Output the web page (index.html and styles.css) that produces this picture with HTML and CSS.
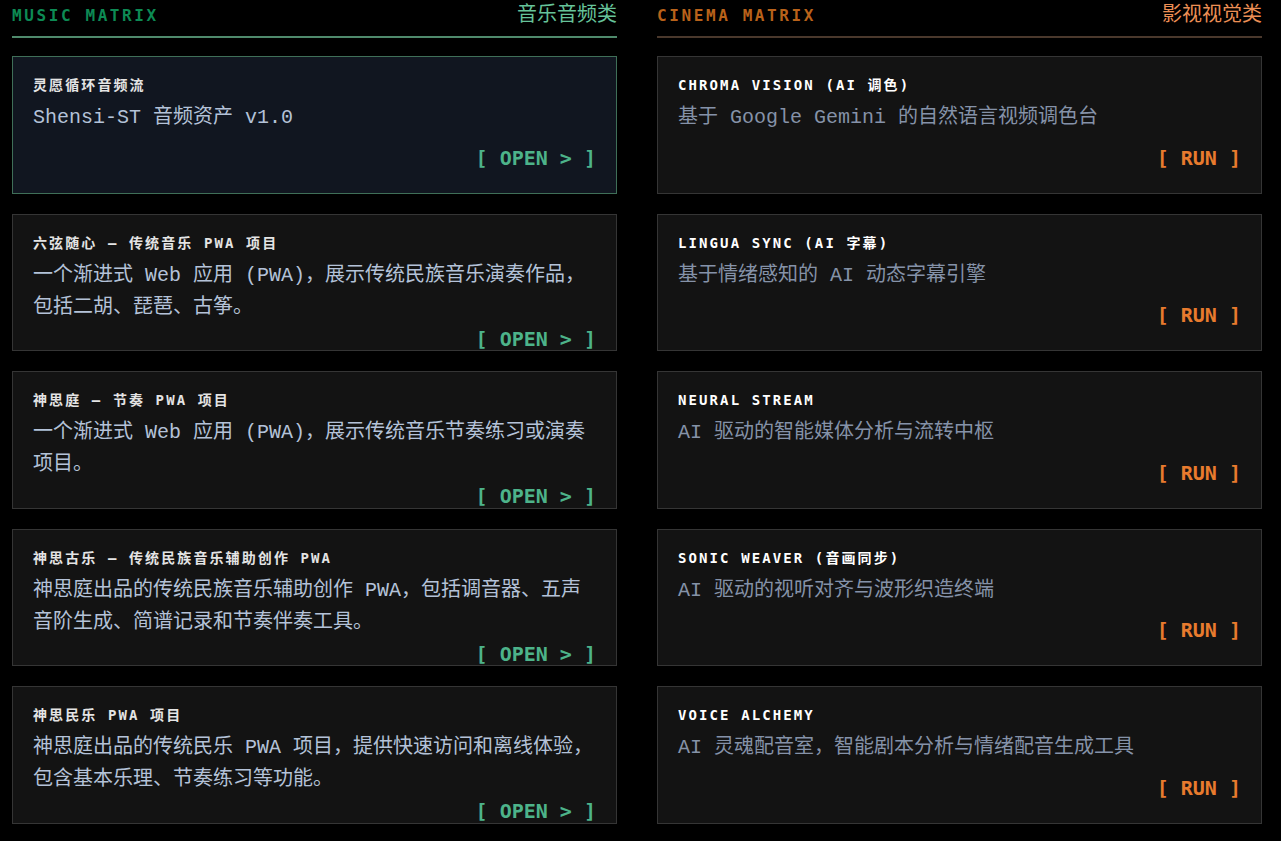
FILE: index.html
```html
<!DOCTYPE html>
<html lang="zh-CN">
<head>
  <meta charset="UTF-8">
  <meta name="viewport" content="width=device-width, initial-scale=1.0">
  <title>Matrix</title>
  <link rel="stylesheet" href="styles.css">
</head>
<body>
  <div class="matrix">
    <section class="column music">
      <header class="col-head">
        <span class="col-tag">MUSIC MATRIX</span>
        <span class="col-name">音乐音频类</span>
      </header>

      <div class="card active">
        <div class="card-title">灵愿循环音频流</div>
        <div class="card-desc">Shensi-ST 音频资产 v1.0</div>
        <span class="card-btn">[ OPEN &gt; ]</span>
      </div>

      <div class="card">
        <div class="card-title">六弦随心 – 传统音乐 PWA 项目</div>
        <div class="card-desc">一个渐进式 Web 应用 (PWA)，展示传统民族音乐演奏作品，包括二胡、琵琶、古筝。</div>
        <span class="card-btn">[ OPEN &gt; ]</span>
      </div>

      <div class="card">
        <div class="card-title">神思庭 – 节奏 PWA 项目</div>
        <div class="card-desc">一个渐进式 Web 应用 (PWA)，展示传统音乐节奏练习或演奏项目。</div>
        <span class="card-btn">[ OPEN &gt; ]</span>
      </div>

      <div class="card">
        <div class="card-title">神思古乐 – 传统民族音乐辅助创作 PWA</div>
        <div class="card-desc">神思庭出品的传统民族音乐辅助创作 PWA，包括调音器、五声音阶生成、简谱记录和节奏伴奏工具。</div>
        <span class="card-btn">[ OPEN &gt; ]</span>
      </div>

      <div class="card">
        <div class="card-title">神思民乐 PWA 项目</div>
        <div class="card-desc">神思庭出品的传统民乐 PWA 项目，提供快速访问和离线体验，包含基本乐理、节奏练习等功能。</div>
        <span class="card-btn">[ OPEN &gt; ]</span>
      </div>
    </section>

    <section class="column cinema">
      <header class="col-head">
        <span class="col-tag">CINEMA MATRIX</span>
        <span class="col-name">影视视觉类</span>
      </header>

      <div class="card">
        <div class="card-title">CHROMA VISION (AI 调色)</div>
        <div class="card-desc">基于 Google Gemini 的自然语言视频调色台</div>
        <span class="card-btn">[ RUN ]</span>
      </div>

      <div class="card">
        <div class="card-title">LINGUA SYNC (AI 字幕)</div>
        <div class="card-desc">基于情绪感知的 AI 动态字幕引擎</div>
        <span class="card-btn">[ RUN ]</span>
      </div>

      <div class="card">
        <div class="card-title">NEURAL STREAM</div>
        <div class="card-desc">AI 驱动的智能媒体分析与流转中枢</div>
        <span class="card-btn">[ RUN ]</span>
      </div>

      <div class="card">
        <div class="card-title">SONIC WEAVER (音画同步)</div>
        <div class="card-desc">AI 驱动的视听对齐与波形织造终端</div>
        <span class="card-btn">[ RUN ]</span>
      </div>

      <div class="card">
        <div class="card-title">VOICE ALCHEMY</div>
        <div class="card-desc">AI 灵魂配音室，智能剧本分析与情绪配音生成工具</div>
        <span class="card-btn">[ RUN ]</span>
      </div>
    </section>
  </div>
</body>
</html>
```

FILE: styles.css
```css
body {
  margin: 0;
  padding: 0 12px;
  background: #000;
  font-family: 'DejaVu Sans Mono', 'Noto Sans CJK SC', monospace;
}
.matrix {
  display: grid;
  grid-template-columns: 605px 605px;
  gap: 40px;
}
.col-head {
  display: flex;
  justify-content: space-between;
  align-items: baseline;
  line-height: 24px;
  padding-top: 1px;
  padding-bottom: 8px;
  border-bottom: 2px solid #4f8a6c;
  margin-bottom: 18px;
}
.col-tag {
  font-size: 16px;
  font-weight: bold;
  letter-spacing: 2.6px;
}
.col-name {
  font-family: 'Noto Sans CJK SC', sans-serif;
  font-size: 20px;
}
.card {
  box-sizing: border-box;
  height: 137.5px;
  display: flex;
  flex-direction: column;
  padding: 20px;
  margin-bottom: 20px;
  background: #131313;
  border: 1px solid #353535;
}
.card-title {
  font-size: 14px;
  line-height: 16px;
  font-weight: bold;
  letter-spacing: 2.1px;
  margin-bottom: 9px;
}
.card-desc {
  font-family: 'Liberation Mono', 'Noto Sans CJK SC', monospace;
  font-size: 20px;
  line-height: 32px;
}
.card-btn {
  margin-top: auto;
  text-align: right;
  font-size: 20px;
  line-height: 30px;
  font-weight: bold;
}

/* music column */
.music .col-tag { color: #0d8a54; }
.music .col-name { color: #66c39a; }
.music .card-title { color: #e4e4e4; }
.music .card-desc { color: #b4c2d8; }
.music .card-btn { color: #4db38a; }
.music .card.active {
  background: #111620;
  border-color: #3f6f58;
}

/* cinema column */
.cinema .col-head { border-bottom-color: #4a382c; }
.cinema .col-tag { color: #b9621a; }
.cinema .col-name { color: #ec8f55; }
.cinema .card-title { color: #fff; }
.cinema .card-desc { color: #8592a8; }
.cinema .card-btn { color: #e87b2e; }
```
